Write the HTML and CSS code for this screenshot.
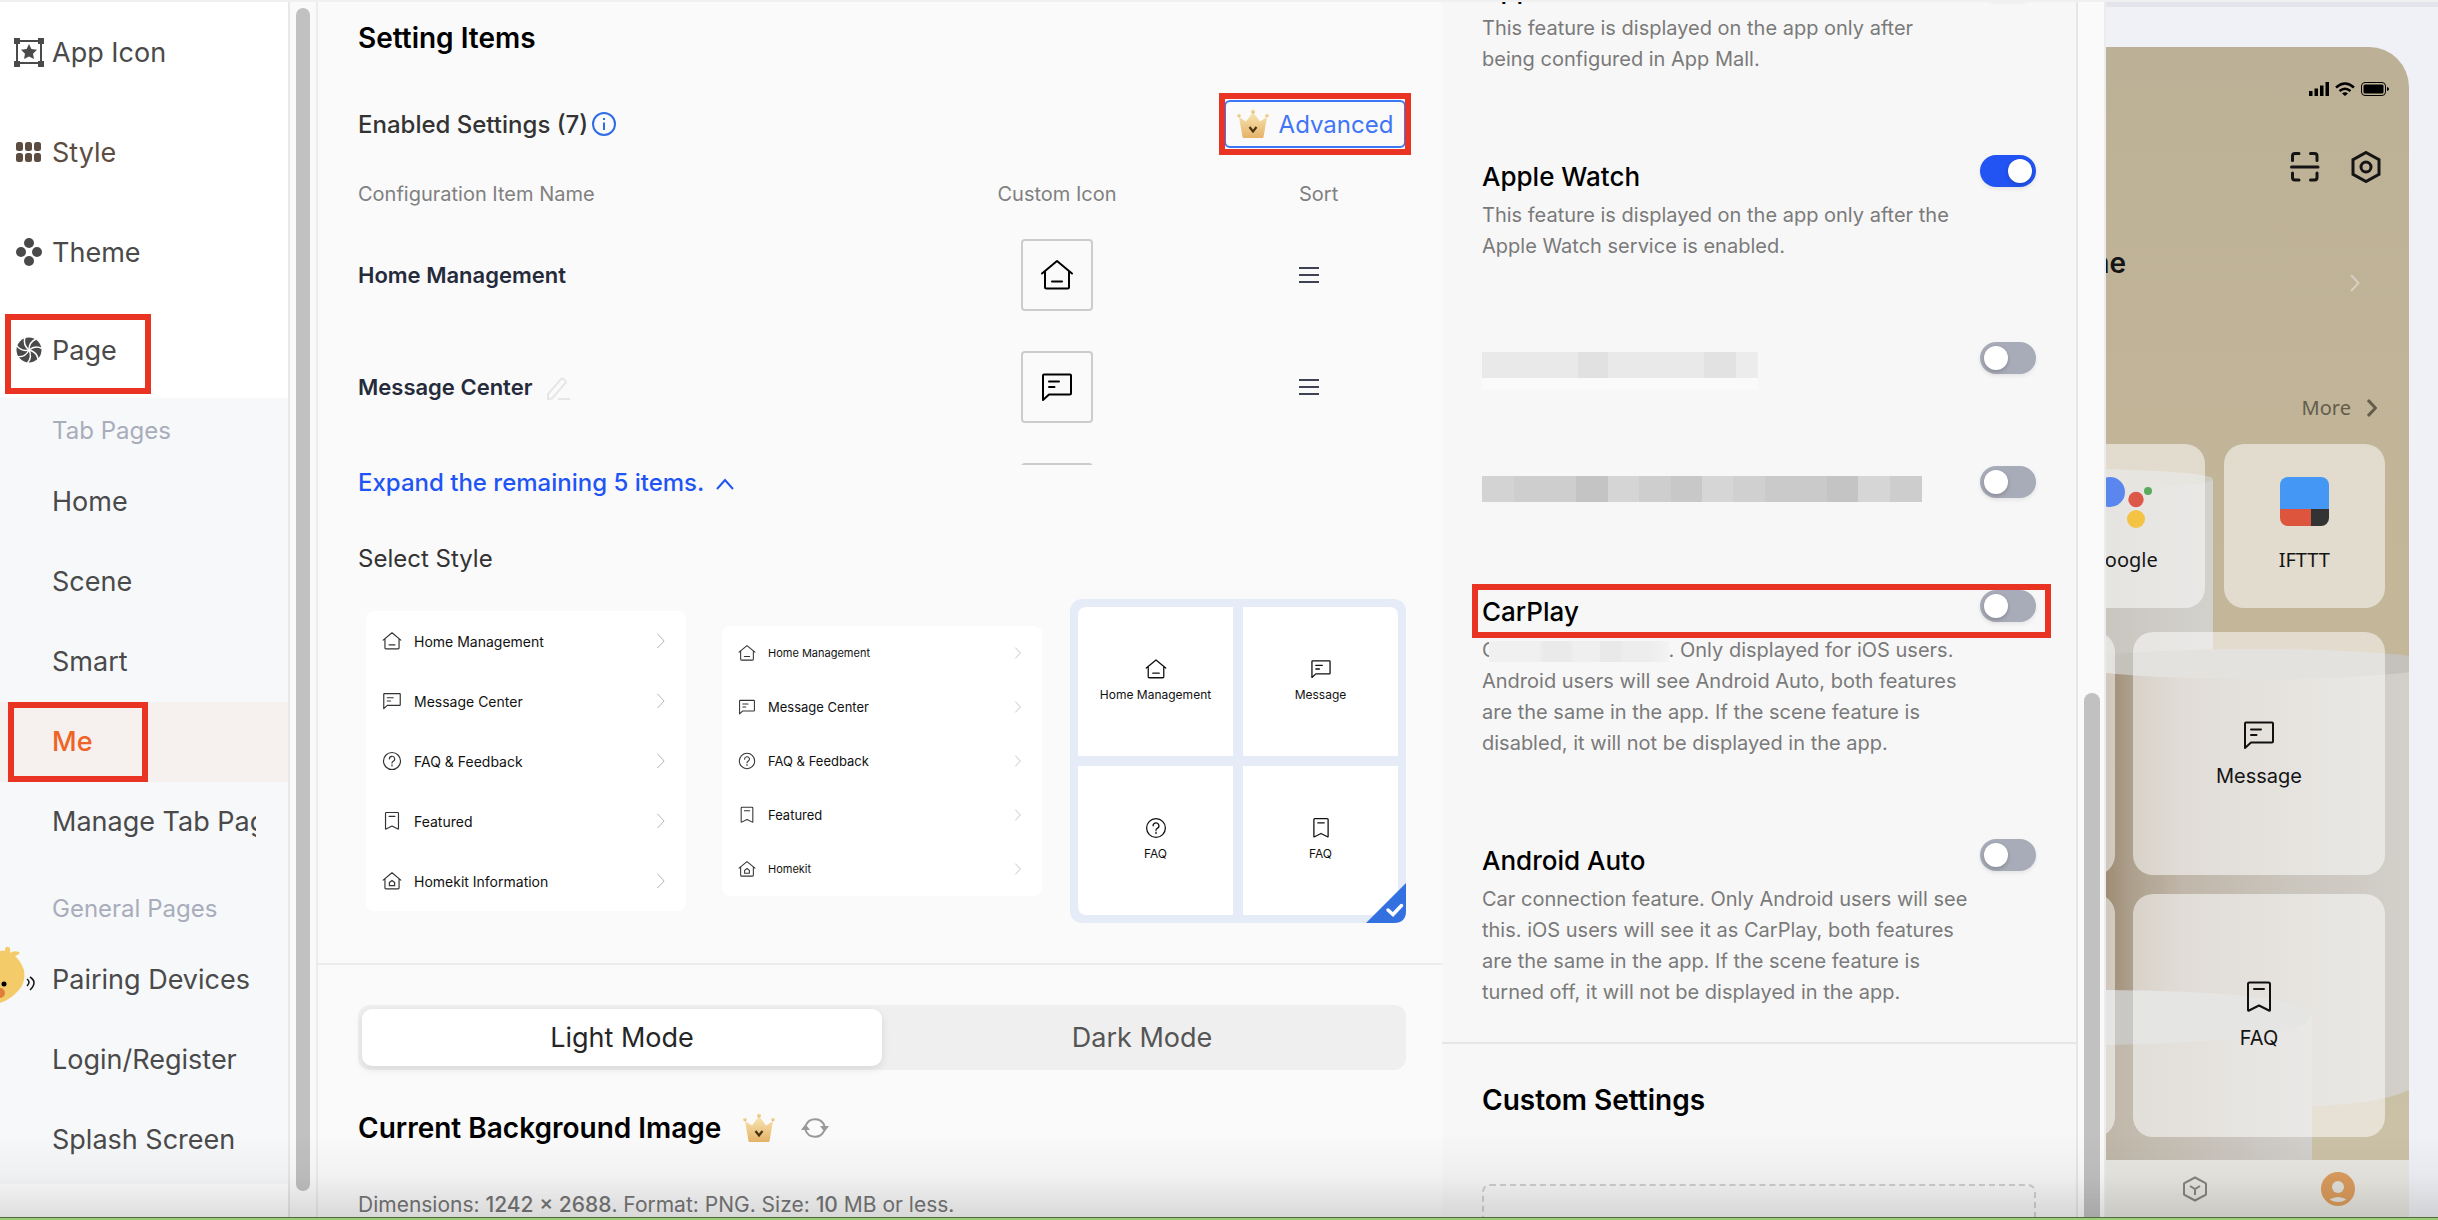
FILE: index.html
```html
<!DOCTYPE html>
<html lang="en">
<head>
<meta charset="utf-8">
<meta name="viewport" content="width=device-width, initial-scale=1">
<title>App Page Settings</title>
<link rel="stylesheet" href="styles.css">
</head>
<body>
<svg class="defs" aria-hidden="true">
  <linearGradient id="gold" x1="0" y1="0" x2="0" y2="1"><stop offset="0" stop-color="#f7e6b4"/><stop offset="1" stop-color="#e6b368"/></linearGradient>
  <symbol id="home" viewBox="0 0 34 34"><path d="M2 15.500 17 3l15 12.500M5 13.500V29q0 1.500 1.500 1.500h21q1.500 0 1.500-1.500V13.500M12 23.500h10"/></symbol>
  <symbol id="homekit" viewBox="0 0 34 34"><path d="M2 15.500 17 3l15 12.500M5 13.500V29q0 1.500 1.500 1.500h21q1.500 0 1.500-1.500V13.500M12.500 25v-5.500L17 16l4.500 3.500V25z"/></symbol>
  <symbol id="message" viewBox="0 0 34 34"><path d="M3 5.500q0-1 1-1h26q1 0 1 1v18q0 1-1 1H9L3 30zM9 11.500h10M9 17h5.500"/></symbol>
  <symbol id="faq" viewBox="0 0 34 34"><circle cx="17" cy="17" r="14.500"/><path d="M12.500 13.500a4.500 4.500 0 1 1 6.500 4q-2 1-2 3M17 23.500v2"/></symbol>
  <symbol id="bookmark" viewBox="0 0 34 34"><path d="M6 4q0-1.500 1.500-1.500h19q1.500 0 1.500 1.500v26q0 1-1 .500l-10-5-10 5q-1 .500-1-.500zM12 9h10"/></symbol>
  <symbol id="chev" viewBox="0 0 10 18"><path d="m1 1 7.500 8L1 17"/></symbol>
  <symbol id="crown" viewBox="0 0 32 30"><path fill="url(#gold)" d="m2 8 7 4.500L16 3l7 9.500L30 8l-3.500 20q0 1-1 1h-19q-1 0-1-1z"/><circle fill="url(#gold)" cx="2" cy="6.500" r="1.800"/><circle fill="url(#gold)" cx="30" cy="6.500" r="1.800"/><circle fill="url(#gold)" cx="16" cy="2.500" r="2"/><path d="m12.500 18 3.500 4.500 3.500-4.500" fill="none" stroke="#4a3312" stroke-width="2.200"/></symbol>
</svg>

<div class="app">
  <aside class="sidebar">
    <nav class="nav">
      <a class="nav-item" href="#icon"><svg viewBox="0 0 30 30"><path d="M3 4h24v22H3z" fill="none" stroke="#4a4a4a" stroke-width="2"/><path d="M0 1h6v6H0zM24 1h6v6h-6zM0 24h6v6H0zM24 24h6v6h-6zM15 7l2.400 5 5.600.800-4 4 1 5.200-5-2.600-5 2.600 1-5.200-4-4 5.600-.800z"/></svg>App Icon</a>
      <a class="nav-item brown" href="#style"><svg viewBox="0 0 30 30"><g><rect x="2" y="5" width="7" height="9" rx="2.500"/><rect x="11" y="5" width="7" height="9" rx="2.500"/><rect x="20" y="5" width="7" height="9" rx="2.500"/><rect x="2" y="16" width="7" height="9" rx="2.500"/><rect x="11" y="16" width="7" height="9" rx="2.500"/><rect x="20" y="16" width="7" height="9" rx="2.500"/></g></svg>Style</a>
      <a class="nav-item" href="#theme"><svg viewBox="0 0 30 30"><circle cx="15" cy="6" r="5"/><circle cx="7" cy="15" r="5"/><circle cx="23" cy="15" r="5"/><circle cx="15" cy="24" r="5"/></svg>Theme</a>
      <a class="nav-item open" href="#page"><svg viewBox="0 0 30 30"><circle cx="15" cy="15" r="12.500"/><g fill="none" stroke="#fff" stroke-width="1.500"><path d="M15 15q0-8 7-11"/><path d="M15 15q0-8 7-11" transform="rotate(51 15 15)"/><path d="M15 15q0-8 7-11" transform="rotate(103 15 15)"/><path d="M15 15q0-8 7-11" transform="rotate(154 15 15)"/><path d="M15 15q0-8 7-11" transform="rotate(206 15 15)"/><path d="M15 15q0-8 7-11" transform="rotate(257 15 15)"/><path d="M15 15q0-8 7-11" transform="rotate(309 15 15)"/></g></svg>Page<span class="mark mark-page"></span></a>
      <div class="subnav">
        <h2 class="group">Tab Pages</h2>
        <a class="sub" href="#home"><span>Home</span></a>
        <a class="sub" href="#scene"><span>Scene</span></a>
        <a class="sub" href="#smart"><span>Smart</span></a>
        <a class="sub active" href="#me"><span>Me</span><i class="mark mark-me"></i></a>
        <a class="sub" href="#tabs"><span>Manage Tab Pages</span></a>
        <h2 class="group second">General Pages</h2>
        <a class="sub" href="#pairing"><span>Pairing Devices</span></a>
        <a class="sub" href="#login"><span>Login/Register</span></a>
        <a class="sub" href="#splash"><span>Splash Screen</span></a>
      </div>
    </nav>
    <div class="track"><div class="thumb"></div></div>
  </aside>

  <main class="main">
    <section class="block">
      <h1 class="title">Setting Items</h1>
      <div class="enabled">
        <h2>Enabled Settings (7)</h2>
        <svg class="info" viewBox="0 0 24 24"><circle cx="12" cy="12" r="11"/><path d="M12 10.500V18M12 6v2"/></svg>
        <button class="advanced" type="button"><svg><use href="#crown"/></svg>Advanced<span class="mark mark-adv"></span></button>
      </div>
      <div class="table-clip">
        <table class="items">
          <thead><tr><th class="c-name">Configuration Item Name</th><th class="c-icon">Custom Icon</th><th class="c-sort">Sort</th></tr></thead>
          <tbody>
            <tr><td class="name">Home Management</td><td><span class="icon-box"><svg class="line"><use href="#home"/></svg></span></td><td><svg class="sort" viewBox="0 0 20 18"><path d="M0 2h20M0 9h20M0 16h20"/></svg></td></tr>
            <tr><td class="name">Message Center <svg class="edit" viewBox="0 0 24 24"><path d="M2 22v-5L15 2q1.500-1 3 .500l1 1q1.500 1 .500 2.500L6 21.500zM12 22h12"/></svg></td><td><span class="icon-box"><svg class="line"><use href="#message"/></svg></span></td><td><svg class="sort" viewBox="0 0 20 18"><path d="M0 2h20M0 9h20M0 16h20"/></svg></td></tr>
            <tr><td></td><td><span class="icon-box"></span></td><td></td></tr>
          </tbody>
        </table>
      </div>
      <a class="expand" href="#all">Expand the remaining 5 items. <svg viewBox="0 0 18 12"><path d="m1 11 8-9 8 9"/></svg></a>
      <h2 class="select">Select Style</h2>
      <div class="styles">
        <div class="style"><ul class="card roomy">
          <li><svg class="line"><use href="#home"/></svg>Home Management<svg class="go"><use href="#chev"/></svg></li>
          <li><svg class="line"><use href="#message"/></svg>Message Center<svg class="go"><use href="#chev"/></svg></li>
          <li><svg class="line"><use href="#faq"/></svg>FAQ &amp; Feedback<svg class="go"><use href="#chev"/></svg></li>
          <li><svg class="line"><use href="#bookmark"/></svg>Featured<svg class="go"><use href="#chev"/></svg></li>
          <li><svg class="line"><use href="#homekit"/></svg>Homekit Information<svg class="go"><use href="#chev"/></svg></li>
        </ul></div>
        <div class="style"><ul class="card compact">
          <li class="tiny"><svg class="line"><use href="#home"/></svg>Home Management<svg class="go"><use href="#chev"/></svg></li>
          <li><svg class="line"><use href="#message"/></svg>Message Center<svg class="go"><use href="#chev"/></svg></li>
          <li><svg class="line"><use href="#faq"/></svg>FAQ &amp; Feedback<svg class="go"><use href="#chev"/></svg></li>
          <li><svg class="line"><use href="#bookmark"/></svg>Featured<svg class="go"><use href="#chev"/></svg></li>
          <li class="tiny"><svg class="line"><use href="#homekit"/></svg>Homekit<svg class="go"><use href="#chev"/></svg></li>
        </ul></div>
        <div class="style chosen"><ul class="tiles">
          <li><svg class="line"><use href="#home"/></svg>Home Management</li>
          <li><svg class="line"><use href="#message"/></svg>Message</li>
          <li><svg class="line"><use href="#faq"/></svg>FAQ</li>
          <li><svg class="line"><use href="#bookmark"/></svg>FAQ</li>
        </ul><svg class="tick" viewBox="0 0 40 40"><path d="M40 0v28q0 12-12 12H0z" fill="#3370e0"/><path d="m22 27 5 4.500 8.500-9" fill="none" stroke="#fff" stroke-width="3.500" stroke-linecap="round"/></svg></div>
      </div>
    </section>
    <section class="block second">
      <div class="modes"><button class="mode on" type="button">Light Mode</button><button class="mode" type="button">Dark Mode</button></div>
      <div class="bg-head"><h2 class="title">Current Background Image</h2><svg class="crown"><use href="#crown"/></svg><svg class="refresh" viewBox="0 0 28 24"><path d="M5 9a10 10 0 0 1 18.500 1M23 15a10 10 0 0 1-18.500-1"/><path class="tip" d="M0 14h9l-4.500-6zM19 10h9l-4.500 6z"/></svg></div>
      <p class="hint">Dimensions: <b>1242 × 2688</b>. Format: PNG. Size: <b>10</b> MB or less.</p>
    </section>
  </main>

  <aside class="features">
    <div class="feature-pane">
      <div class="feature-list">
        <div class="feature"><div><label class="f-title" for="f1">App Mall</label><p>This feature is displayed on the app only after<br>being configured in App Mall.</p></div><input id="f1" class="toggle" type="checkbox"></div>
        <div class="feature"><div><label class="f-title" for="f2">Apple Watch</label><p>This feature is displayed on the app only after the<br>Apple Watch service is enabled.</p></div><input id="f2" class="toggle" type="checkbox" checked></div>
        <div class="feature"><div class="masked light"></div><input class="toggle" type="checkbox" aria-label="Hidden feature one"></div>
        <div class="feature"><div class="masked dark"></div><input class="toggle" type="checkbox" aria-label="Hidden feature two"></div>
        <div class="feature"><div><label class="f-title" for="f5">CarPlay</label><p>C<span class="smudge"></span>. Only displayed for iOS users.<br>Android users will see Android Auto, both features<br>are the same in the app. If the scene feature is<br>disabled, it will not be displayed in the app.</p></div><input id="f5" class="toggle" type="checkbox"><span class="mark mark-car"></span></div>
        <div class="feature last"><div><label class="f-title" for="f6">Android Auto</label><p>Car connection feature. Only Android users will see<br>this. iOS users will see it as CarPlay, both features<br>are the same in the app. If the scene feature is<br>turned off, it will not be displayed in the app.</p></div><input id="f6" class="toggle" type="checkbox"></div>
      </div>
      <div class="custom"><h2 class="title">Custom Settings</h2><div class="drop"></div></div>
    </div>
    <div class="track right"><div class="thumb low"></div></div>
  </aside>

  <aside class="preview">
    <div class="phone">
      <svg class="scene" viewBox="0 0 570 1113" preserveAspectRatio="xMaxYMin slice" aria-hidden="true">
        <defs>
          <linearGradient id="wall" x1="0" y1="0" x2="0" y2="1"><stop offset="0" stop-color="#bcb096"/><stop offset=".6" stop-color="#c5b89a"/><stop offset="1" stop-color="#cbc2a7"/></linearGradient>
          <linearGradient id="body" gradientUnits="userSpaceOnUse" x1="267" y1="0" x2="570" y2="0"><stop offset="0" stop-color="#9f8c74"/><stop offset=".08" stop-color="#ac9f8b"/><stop offset=".25" stop-color="#c0b6a9"/><stop offset=".6" stop-color="#cac5bd"/><stop offset="1" stop-color="#d3d0ca"/></linearGradient>
          <linearGradient id="front" gradientUnits="userSpaceOnUse" x1="267" y1="0" x2="473" y2="0"><stop offset="0" stop-color="#c0b7a9"/><stop offset="1" stop-color="#d2d0cd"/></linearGradient>
          <linearGradient id="back" gradientUnits="userSpaceOnUse" x1="267" y1="0" x2="374" y2="0"><stop offset="0" stop-color="#c9c6c0"/><stop offset="1" stop-color="#d3d1cc"/></linearGradient>
        </defs>
        <path fill="url(#wall)" d="M0 0h570v1113H0z"/>
        <path fill="url(#back)" d="M0 433h374v260H0z"/>
        <ellipse cx="234" cy="432" rx="140" ry="10" fill="#cdc9be"/>
        <path fill="url(#body)" d="M0 617h570v426q-30 14-97 16H0z"/>
        <ellipse cx="415" cy="617" rx="186" ry="15" fill="#c5c2bc"/>
        <path fill="url(#front)" d="M0 968h473v145H0z"/>
        <path fill="#c9c8c4" d="M0 943h270q195 2 202 25 0 26-202 30H0z"/>
      </svg>
      <div class="status"><svg viewBox="0 0 20 14"><path d="M0 9h3.500v5H0zM5.500 6.500H9V14H5.500zM11 3.500h3.500V14H11zM16.500 0H20v14h-3.500z"/></svg><svg viewBox="0 0 20 14"><path d="M1 5.500q9-8 18 0M4.500 9q5.500-4.500 11 0" fill="none" stroke="#000" stroke-width="2.400"/><path d="M7 11.500q3-2.500 6 0L10 14z"/></svg><svg class="batt" viewBox="0 0 28 14"><rect x=".500" y=".500" width="24" height="13" rx="3.500" fill="none" stroke="#000"/><rect x="2.500" y="2.500" width="20" height="9" rx="1.500"/><path d="M26 5q2 .500 2 2t-2 2z"/></svg></div>
      <div class="tools"><svg viewBox="0 0 30 32"><path d="M2.500 9.500V5q0-2.500 2.500-2.500h4M20.500 2.500h4q2.500 0 2.500 2.500v4.500M2.500 22v4.500q0 2.500 2.500 2.500h4M20.500 29h4q2.500 0 2.500-2.500V22M1.500 16h26.500"/></svg><svg viewBox="0 0 30 32"><path d="m15 1.500 13 7.250v14.500L15 30.500 2 23.250V8.750z"/><circle cx="15" cy="16" r="5"/></svg></div>
      <div class="profile"><strong>Nickname</strong><svg><use href="#chev"/></svg></div>
      <a class="more" href="#more">More<svg><use href="#chev"/></svg></a>
      <div class="services">
        <div class="glass"></div>
        <div class="glass"><svg viewBox="0 0 57 51"><circle cx="15" cy="15" r="15" fill="#5b86ee"/><circle cx="41" cy="22.500" r="7.700" fill="#dc5848"/><circle cx="53" cy="14" r="4" fill="#5aaa5e"/><circle cx="41" cy="42" r="9" fill="#f4c343"/></svg>Google</div>
        <div class="glass"><svg viewBox="0 0 57 51"><clipPath id="rd"><rect x="4" width="49" height="49" rx="8"/></clipPath><g clip-path="url(#rd)"><path fill="#4597f6" d="M4 0h49v32H4z"/><path fill="#dc553c" d="M4 32h31v18H4z"/><path fill="#333" d="M35 32h18v18H35z"/></g></svg>IFTTT</div>
      </div>
      <div class="shortcuts">
        <div class="glass big"></div>
        <div class="glass big"><svg class="line"><use href="#message"/></svg>Message</div>
        <div class="glass big"></div>
        <div class="glass big"><svg class="line"><use href="#bookmark"/></svg>FAQ</div>
      </div>
      <div class="tabbar"><span></span><span></span><svg viewBox="0 0 34 34"><path d="M17 5.500 27.500 11q.500.500.500 1v10q0 .500-.500 1L17 28.500 6.500 23q-.500-.500-.500-1V12q0-.500.500-1zM12 14l5 3 5-3M17 17v6" fill="none" stroke="#858583" stroke-width="2"/></svg><svg viewBox="0 0 34 34"><circle cx="17" cy="17" r="17" fill="#dc9d5e"/><circle cx="17" cy="15" r="6" fill="#e4e3dd"/><path d="M8.500 27.500q8.500-5 17 0-8.500 5-17 0" fill="#e4e3dd"/></svg></div>
    </div>
  </aside>
</div>
<svg class="chick" viewBox="0 0 36 64"><path d="M0 5q4-1 5 0 0-5 3-4 3 0 2 6 4-3 9-1 2 2-4 4 5 4 9 14 2 12-5 20-9 10-19 13z" fill="#f3cb69"/><circle cx="4" cy="38" r="2.500"/><circle cx="0" cy="47" r="5" fill="#dd7f38"/><path d="M27 33q4 3 0 7M30 31q8 5 0 13" fill="none" stroke="#111" stroke-width="1.500"/></svg>
<div class="shade"></div>
<div class="desk"></div>
</body>
</html>
```
FILE: styles.css
```css
* { box-sizing: border-box; margin: 0; padding: 0; }
body { height: 100vh; overflow: hidden; display: flex; flex-direction: column; font-family: Inter, "Liberation Sans", sans-serif; font-size: 20px; color: #333; background: #fafafa; border-top: 2px solid #f0f0f0; }
a { color: inherit; text-decoration: none; }
button { font: inherit; border: 0; background: none; cursor: pointer; }
ul { list-style: none; }
svg { flex: none; }
.defs { position: absolute; width: 0; height: 0; }
.line { fill: none; stroke: #111; stroke-width: 2; stroke-linecap: round; stroke-linejoin: round; }
.mark { position: absolute; border: 6px solid #e93323; pointer-events: none; }

.app { flex: 1; min-height: 0; display: grid; grid-template-columns: 318px minmax(0, 1fr) 664px 332px; }
.app > * { overflow: hidden; }
.desk { height: 3px; border-top: 1px solid #4d6b3c; background: #9ccc7a; flex: none; }
.shade { position: fixed; left: 0; right: 0; bottom: 3px; height: 84px; background: linear-gradient(rgba(0,0,0,0), rgba(0,0,0,.03) 50%, rgba(0,0,0,.13)); pointer-events: none; }

.sidebar { display: flex; }
.nav { flex: 1; min-width: 0; background: #fff; border-right: 2px solid #e8e8e8; }
.nav-item { position: relative; height: 100px; padding-left: 14px; display: flex; align-items: center; gap: 8px; font-size: 27px; color: #4a4a4a; font-weight: 400; }
.nav-item svg { width: 30px; height: 30px; fill: currentColor; }
.nav-item.brown { color: #5c4c41; }
.nav-item.open { height: 96px; }
.mark-page { left: 5px; top: 12px; width: 146px; height: 80px; }
.subnav { background: #f7f8fa; padding-bottom: 4px; }
.group { height: 64px; padding-left: 52px; line-height: 66px; font-size: 24px; font-weight: 400; color: #a8adbc; }
.group.second { margin-top: 14px; }
.sub { position: relative; display: block; height: 80px; padding: 0 32px 0 52px; line-height: 80px; font-size: 27px; font-weight: 400; color: #4a4a4a; }
.sub span { display: block; overflow: hidden; white-space: nowrap; }
.sub.active { background: #f6f0ee; color: #ee6426; font-weight: 500; }
.mark-me { left: 8px; top: 0; width: 140px; height: 80px; }
.track { flex: none; width: 28px; padding: 6px 6px 26px; border-right: 2px solid #ececec; background: #fafafa; display: flex; }
.thumb { width: 16px; border-radius: 8px; background: #c1c1c1; }
.chick { position: absolute; left: 0; top: 946px; width: 36px; height: 64px; }

.block { padding: 16px 36px 40px 40px; border-bottom: 2px solid #ececec; }
.title { font-size: 28px; line-height: 40px; font-weight: 600; color: #000; }
.enabled { display: flex; align-items: center; height: 48px; margin-top: 42px; }
.enabled h2 { font-size: 24px; font-weight: 500; }
.info { width: 24px; height: 24px; margin-left: 4px; fill: none; stroke: #2f6de5; stroke-width: 2; }
.advanced { position: relative; margin-left: auto; width: 182px; height: 48px; border: 2px solid #3f75f7; border-radius: 6px; display: flex; align-items: center; justify-content: center; gap: 10px; font-size: 24px; color: #3f75f7; }
.advanced svg, .crown { width: 32px; height: 30px; }
.mark-adv { inset: -9px -7px; }
.table-clip { height: 296px; overflow: hidden; margin-top: 21px; }
.items { width: 100%; table-layout: fixed; border-collapse: collapse; text-align: left; }
.items th { height: 50px; font-weight: 400; color: #808080; }
.items td { height: 112px; }
.c-icon { width: 484px; }
.items .c-icon { text-align: center; }
.c-sort { width: 107px; }
.items td:nth-child(2) { text-align: center; }
.items .name { font-size: 22px; font-weight: 600; color: #252b3a; }
.icon-box { display: inline-flex; align-items: center; justify-content: center; width: 72px; height: 72px; border: 2px solid #ccc; border-radius: 4px; vertical-align: middle; }
.icon-box svg { width: 34px; height: 34px; stroke: #000; }
.sort { display: block; width: 20px; height: 18px; stroke: #3e4254; stroke-width: 2; }
.edit { width: 24px; height: 24px; margin-left: 8px; vertical-align: middle; fill: none; stroke: #e6e6e6; stroke-width: 2; }
.expand { display: block; line-height: 36px; font-size: 24px; font-weight: 500; color: #1f54f5; }
.expand svg { width: 18px; height: 12px; margin-left: 6px; vertical-align: middle; fill: none; stroke: #1f54f5; stroke-width: 2; }
.select { margin-top: 40px; line-height: 36px; font-size: 24px; font-weight: 400; }
.styles { margin-top: 22px; display: grid; grid-template-columns: repeat(3, 1fr); gap: 20px; align-items: center; }
.style { position: relative; padding: 8px; }
.card { background: #fff; border-radius: 8px; padding: 0 20px 0 16px; }
.card li { height: 60px; display: flex; align-items: center; gap: 12px; font-size: 14px; color: #111; }
.card .line { width: 20px; height: 20px; stroke: #333; stroke-width: 2; }
.card .go { width: 10px; height: 16px; margin-left: auto; fill: none; stroke: #aaa; stroke-width: 1; }
.compact li { height: 54px; font-size: 13px; }
.compact .tiny { font-size: 11px; }
.compact .line { width: 18px; height: 18px; }
.compact .go { width: 8px; height: 12px; }
.style.chosen { background: #e5ebf7; border-radius: 12px; }
.tiles { display: grid; grid-template-columns: 1fr 1fr; gap: 10px; border-radius: 8px; overflow: hidden; }
.tiles li { height: 149px; background: #fff; display: flex; flex-direction: column; align-items: center; justify-content: center; gap: 5px; font-size: 12px; line-height: 20px; color: #111; }
.tiles .line { width: 22px; height: 22px; }
.tick { position: absolute; right: 0; bottom: 0; width: 40px; height: 40px; }
.block.second { padding-top: 40px; border: 0; }
.modes { display: grid; grid-template-columns: 1fr 1fr; padding: 4px; border-radius: 12px; background: #efefef; }
.mode { height: 57px; border-radius: 10px; font-size: 27px; color: #555; font-weight: 400; }
.mode.on { background: #fff; color: #262626; box-shadow: 0 3px 8px rgba(0,0,0,.1); }
.bg-head { display: flex; align-items: center; gap: 22px; margin-top: 38px; }
.refresh { width: 28px; height: 24px; margin-left: 4px; fill: none; stroke: #999; stroke-width: 2; }
.refresh .tip { fill: #999; stroke: none; }
.hint { margin-top: 42px; line-height: 30px; font-size: 21px; color: #777; white-space: nowrap; }
.hint b { font-weight: 500; }

.features { display: flex; }
.feature-pane { flex: 1; min-width: 0; background: #f7f7f7; border-right: 2px solid #e6e6e6; }
.feature-list { margin-top: -34px; padding: 0 40px 34px; border-bottom: 2px solid #e6e6e6; }
.feature { position: relative; display: flex; justify-content: space-between; min-height: 44px; margin-bottom: 80px; }
.feature.last { margin-bottom: 0; }
.f-title { display: block; font-size: 26px; line-height: 44px; font-weight: 500; color: #000; }
.feature p { margin-top: 1px; line-height: 31px; color: #7a7a7a; white-space: nowrap; }
.toggle { appearance: none; width: 56px; height: 32px; border-radius: 16px; background: #a8acb8; padding: 4px; flex: none; box-shadow: 0 2px 4px rgba(0,0,0,.08); }
.toggle::before { content: ""; display: block; width: 24px; height: 24px; border-radius: 50%; background: #fff; box-shadow: 0 2px 4px rgba(0,0,0,.2); }
.toggle:checked { background: #2254f4; }
.toggle:checked::before { margin-left: auto; }
.masked { height: 26px; margin-top: 10px; }
.masked.light { width: 276px; background: linear-gradient(90deg, #e9e9e9 0 96px, #e1e1e1 96px 126px, #e9e9e9 126px 222px, #e2e2e2 222px 254px, #ececec 254px); box-shadow: 0 12px 0 #fafafa; }
.masked.dark { width: 440px; background: linear-gradient(90deg, #d3d3d3 0 32px, #cecece 32px 94px, #c4c4c4 94px 126px, #d5d5d5 126px 157px, #cecece 157px 189px, #c8c8c8 189px 220px, #d6d6d6 220px 251px, #d0d0d0 251px 283px, #cacaca 283px 345px, #c4c4c4 345px 376px, #d6d6d6 376px 408px, #cdcdcd 408px); }
.smudge { display: inline-block; width: 180px; height: 21px; margin-left: -8px; vertical-align: middle; background: linear-gradient(90deg, #f0f0f0 0 50px, #eaeaea 55px 80px, #efefef 85px 110px, #e9e9e9 112px 130px, #ededed 135px 160px, #f3f3f3); position: relative; }
.mark-car { left: -10px; right: -15px; top: -6px; height: 54px; }
.custom { padding: 36px 40px; }
.drop { margin-top: 64px; height: 200px; border: 2px dashed #d0d0d0; border-radius: 8px; }
.track.right { width: 28px; padding: 691px 4px 0 6px; }
.thumb.low { border-radius: 8px 8px 0 0; }

.preview { display: flex; justify-content: flex-end; padding: 40px 29px 0 0; background: #f0f1f6; border-top: 5px solid #e4e5ea; }
.phone { position: relative; flex: none; width: 570px; display: flex; flex-direction: column; border-radius: 40px 40px 0 0; overflow: hidden; color: #141414; }
.scene { position: absolute; left: 0; top: 0; width: 570px; height: 1113px; }
.phone > :not(.scene) { position: relative; }
.status { display: flex; justify-content: flex-end; gap: 6px; margin-top: 35px; padding-right: 20px; }
.status svg { width: 20px; height: 14px; }
.status .batt { width: 28px; }
.tools { display: flex; justify-content: flex-end; gap: 31px; margin-top: 55px; padding-right: 28px; }
.tools svg { width: 30px; height: 32px; fill: none; stroke: #141414; stroke-width: 3; stroke-linecap: round; }
.profile { display: flex; justify-content: flex-end; align-items: center; gap: 224px; height: 80px; margin-top: 60px; padding-right: 49px; }
.profile strong { height: 80px; line-height: 40px; font-size: 28px; font-weight: 600; }
.profile svg { width: 10px; height: 18px; fill: none; stroke: #d8cec2; stroke-width: 2; }
.more { align-self: flex-end; display: flex; align-items: center; gap: 16px; margin-top: 69px; padding-right: 32px; line-height: 32px; font-family: "Noto Sans", sans-serif; color: #645c4c; }
.more svg { width: 10px; height: 18px; fill: none; stroke: #645c4c; stroke-width: 3; }
.services, .shortcuts { display: grid; grid-template-columns: repeat(3, 1fr); gap: 19px; padding: 0 24px; margin-top: 20px; }
.shortcuts { grid-template-columns: repeat(2, 1fr); gap: 19px 18px; margin-top: 24px; }
.glass { height: 164px; border-radius: 20px; background: rgba(255,255,255,.52); display: flex; flex-direction: column; align-items: center; padding-top: 33px; gap: 16px; font-family: "Noto Sans", sans-serif; line-height: 32px; }
.glass svg { width: 57px; height: 51px; }
.glass.big { height: 243px; padding-top: 86px; gap: 8px; font-family: Inter, sans-serif; }
.glass.big svg { width: 34px; height: 34px; }
.tabbar { display: grid; grid-template-columns: repeat(4, 1fr); justify-items: center; align-items: center; height: 58px; margin-top: 23px; background: #e8e7e1; }
.tabbar svg { width: 34px; height: 34px; }
```
